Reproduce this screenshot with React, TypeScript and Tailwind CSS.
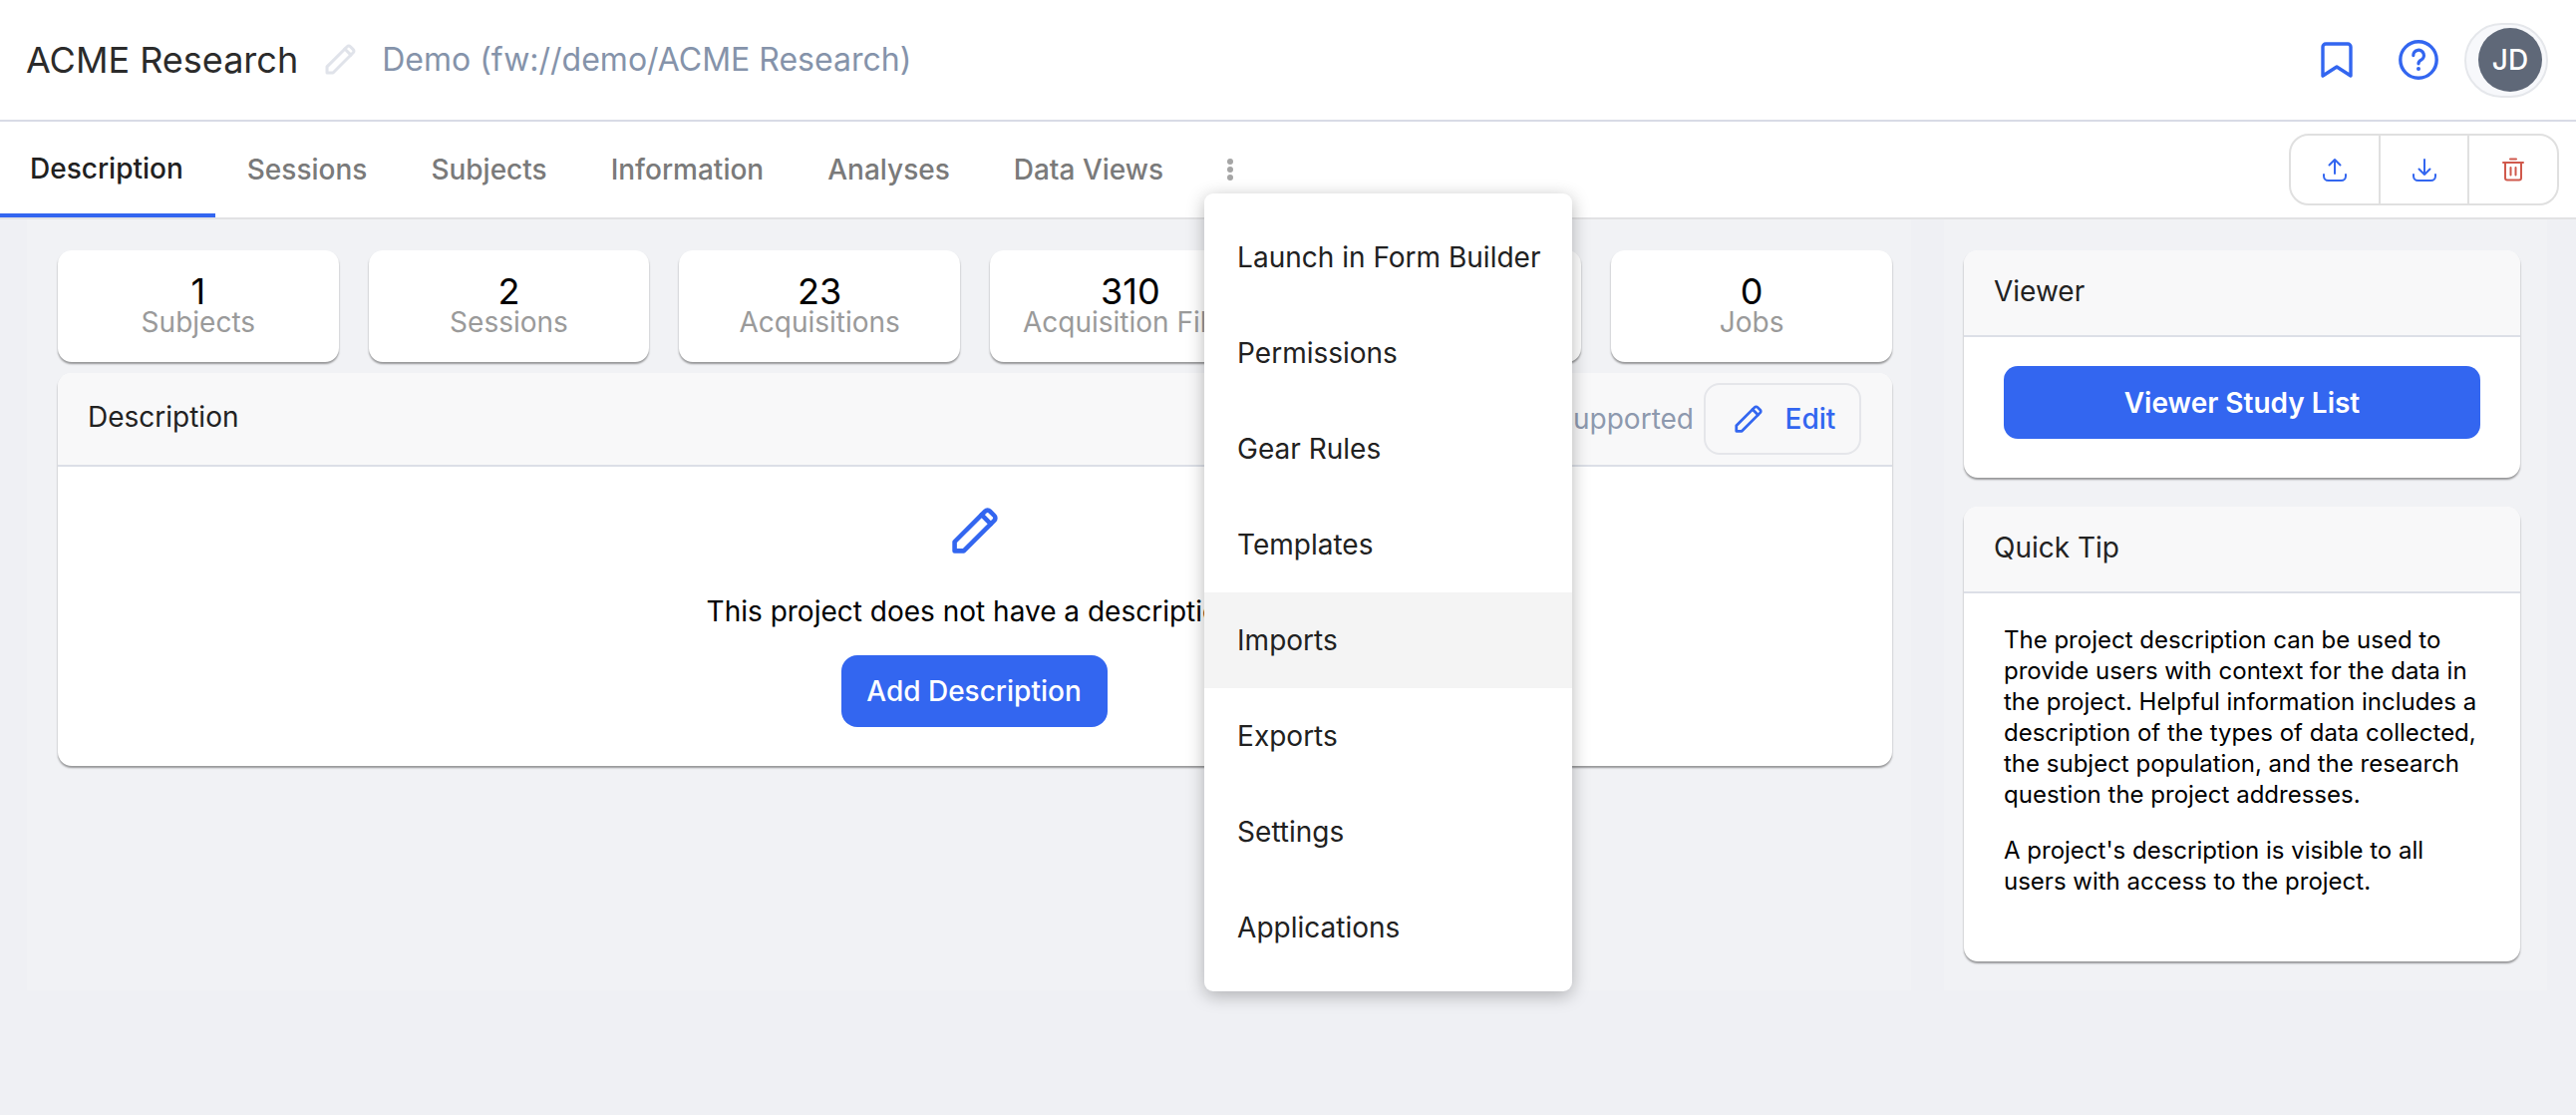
import type { ReactNode } from "react";

const tabs = ["Description", "Sessions", "Subjects", "Information", "Analyses", "Data Views"];

const stats = [
	{ value: "1", label: "Subjects" },
	{ value: "2", label: "Sessions" },
	{ value: "23", label: "Acquisitions" },
	{ value: "310", label: "Acquisition Files" },
	{ value: "0", label: "Analyses" },
	{ value: "0", label: "Jobs" },
];

const menuItems = [
	"Launch in Form Builder",
	"Permissions",
	"Gear Rules",
	"Templates",
	"Imports",
	"Exports",
	"Settings",
	"Applications",
];

function PencilIcon({ className }: { className: string }) {
	return (
		<svg viewBox="0 0 24 24" fill="none" stroke="currentColor" strokeWidth="2.2" strokeLinejoin="round" strokeLinecap="round" className={className}>
			<path d="M2.2 21.8v-4.4L16.9 2.7a1.6 1.6 0 0 1 2.3 0l2.1 2.1a1.6 1.6 0 0 1 0 2.3L6.6 21.8z" />
			<path d="M15.2 4.4l4.4 4.4" />
		</svg>
	);
}

function UploadIcon({ className }: { className: string }) {
	return (
		<svg viewBox="0 0 24 24" fill="none" stroke="currentColor" strokeWidth="2" strokeLinecap="round" strokeLinejoin="round" className={className}>
			<path d="M12 16V2M6.5 7.5L12 2l5.5 5.5" />
			<path d="M1 17v1.5A4.5 4.5 0 0 0 5.5 23h13a4.5 4.5 0 0 0 4.5-4.5V17" />
		</svg>
	);
}

function DownloadIcon({ className }: { className: string }) {
	return (
		<svg viewBox="0 0 24 24" fill="none" stroke="currentColor" strokeWidth="2" strokeLinecap="round" strokeLinejoin="round" className={className}>
			<path d="M12 2v15M6.5 11.5L12 17l5.5-5.5" />
			<path d="M1 17v1.5A4.5 4.5 0 0 0 5.5 23h13a4.5 4.5 0 0 0 4.5-4.5V17" />
		</svg>
	);
}

function TrashIcon({ className }: { className: string }) {
	return (
		<svg viewBox="0 0 24 24" fill="none" stroke="currentColor" strokeWidth="2" strokeLinecap="round" strokeLinejoin="round" className={className}>
			<path d="M9 1.5h6M2 5h20" />
			<path d="M4 5v15.5A2 2 0 0 0 6 22.5h12a2 2 0 0 0 2-2V5" />
			<path d="M9.5 10v7.5M14.5 10v7.5" />
		</svg>
	);
}

function Card({ title, right, children }: { title: string; right?: ReactNode; children: ReactNode }) {
	return (
		<div className="rounded-[14px] bg-white shadow-[0_2px_2px_rgba(0,0,0,0.38)]">
			<div className="flex min-h-[87px] items-center justify-between rounded-t-[14px] border-b-2 border-[#dcdfe7] bg-[#f8f8f9] py-[10px] pl-[30px] pr-[31px] text-[28px] text-[#222222]">
				<span className="pb-[4px]">{title}</span>
				{right}
			</div>
			{children}
		</div>
	);
}

export default function App() {
	return (
		<div className="flex h-screen w-full flex-col overflow-hidden bg-[#eff0f4] [font-family:Inter,sans-serif]">
			<header className="flex h-[122px] shrink-0 items-center border-b-2 border-[#d8dbe6] bg-white pl-[26px] pr-[28px]">
				<h1 className="text-[36px] font-normal text-[#2b2b2b]">ACME Research</h1>
				<PencilIcon className="ml-[26px] mb-[2px] h-[33px] w-[33px] text-[#e0e3ea]" />
				<span className="ml-[25px] text-[32px] text-[#8593aa]">Demo (fw://demo/ACME Research)</span>
				<div className="ml-auto flex items-center">
					<svg viewBox="0 0 32 36" fill="none" stroke="#3366f0" strokeWidth="3.4" strokeLinejoin="round" className="h-[36px] w-[32px]">
						<path d="M2 5a3 3 0 0 1 3-3h22a3 3 0 0 1 3 3v29l-14-9-14 9z" />
					</svg>
					<svg viewBox="0 0 40 40" fill="none" className="ml-[46px] h-[40px] w-[40px]">
						<circle cx="20" cy="20" r="18.2" stroke="#3366f0" strokeWidth="3.4" />
						<path d="M14.8 15.6a5.3 5.3 0 1 1 7.8 4.6c-1.7 1-2.6 1.8-2.6 3.6" stroke="#3366f0" strokeWidth="3.2" strokeLinecap="round" />
						<circle cx="20" cy="29" r="2" fill="#3366f0" />
					</svg>
					<div className="ml-[26px] flex h-[75px] w-[84px] items-center justify-end rounded-full border-2 border-[#e5e7eb] bg-[#f7f8fb] pr-[4px]">
						<div className="flex h-[64px] w-[64px] items-center justify-center rounded-full bg-[#5f6878] text-[28px] font-medium text-white">JD</div>
					</div>
				</div>
			</header>

			<nav className="flex h-[98px] shrink-0 items-center border-b-2 border-[#e2e2e4] bg-white pr-[17px]">
				<div className="flex h-full items-stretch">
					{tabs.map((tab, i) => (
						<div
							key={tab}
							className={
								i === 0
									? "flex items-center border-b-4 border-[#3366f0] pl-[30px] pr-[32px] pt-[1px] text-[28px] font-medium text-[#212121]"
									: "flex items-center px-[32px] text-[28px] font-medium text-[#7a7a7a]"
							}
						>
							{tab}
						</div>
					))}
					<div className="relative flex w-[70px] items-center justify-center">
						<div className="flex flex-col gap-[2px]">
							<span className="h-[6px] w-[6px] rounded-full bg-[#a5a5a5]" />
							<span className="h-[6px] w-[6px] rounded-full bg-[#a5a5a5]" />
							<span className="h-[6px] w-[6px] rounded-full bg-[#a5a5a5]" />
						</div>
						<div className="absolute left-[9px] top-[72px] z-10 w-[369px] rounded-[9px] bg-white py-[16px] shadow-[0_4px_18px_rgba(0,0,0,0.28)]">
							{menuItems.map((item) => (
								<div
									key={item}
									className={
										item === "Imports"
											? "flex h-[96px] items-center bg-[#f4f4f4] pl-[33px] text-[28px] text-[#212121]"
											: "flex h-[96px] items-center pl-[33px] text-[28px] text-[#212121]"
									}
								>
									{item}
								</div>
							))}
						</div>
					</div>
				</div>
				<div className="ml-auto flex h-[72px] w-[271px] rounded-[20px] border-2 border-[#e0e0e0]">
					<div className="flex flex-1 items-center justify-center border-r-2 border-[#e0e0e0]">
						<UploadIcon className="h-[24px] w-[24px] text-[#3366f0]" />
					</div>
					<div className="flex flex-1 items-center justify-center border-r-2 border-[#e0e0e0]">
						<DownloadIcon className="h-[24px] w-[24px] text-[#3366f0]" />
					</div>
					<div className="flex flex-1 items-center justify-center">
						<TrashIcon className="h-[24px] w-[24px] text-[#d0594c]" />
					</div>
				</div>
			</nav>

			<div className="flex flex-1 items-start pl-[27px]">
				<main className="h-[773px] w-[1890px] bg-[#f1f2f5] pl-[31px] pr-[19px] pt-[31px]">
					<div className="grid grid-cols-6 gap-[30px]">
						{stats.map((s) => (
							<div key={s.label} className="flex h-[112px] flex-col items-center justify-center rounded-[14px] bg-white pb-[4px] shadow-[0_2px_2px_rgba(0,0,0,0.38)]">
								<span className="text-[36px] leading-[36px] text-black">{s.value}</span>
								<span className="text-[28px] leading-[26px] text-[#9a9a9a]">{s.label}</span>
							</div>
						))}
					</div>
					<div className="mt-[11px]">
						<Card
							title="Description"
							right={
								<div className="flex items-center gap-[10px]">
									<span className="text-[28px] text-[#8d99ae]">Markdown supported</span>
									<div className="flex h-[72px] w-[158px] items-center justify-center gap-[22px] rounded-[16px] border-2 border-[#e5e6ea] pl-[4px] font-medium text-[#3366f0]">
										<PencilIcon className="h-[30px] w-[30px]" />
										<span>Edit</span>
									</div>
								</div>
							}
						>
							<div className="flex h-[300px] flex-col items-center pt-[39px]">
								<PencilIcon className="h-[50px] w-[50px] text-[#3366f0]" />
								<p className="mt-[40px] text-[28px] leading-[33px] text-black">This project does not have a description.</p>
								<button className="mr-[2px] mt-[27px] h-[72px] w-[267px] rounded-[16px] bg-[#3366f0] text-[28px] font-medium text-white">Add Description</button>
							</div>
						</Card>
					</div>
				</main>
				<aside className="ml-[33px] h-[773px] w-[605px] bg-[#f1f2f5] pl-[20px] pr-[27px] pt-[31px]">
					<Card title="Viewer">
						<div className="flex h-[141px] items-start px-[40px] pt-[29px]">
							<button className="h-[73px] w-full rounded-[14px] bg-[#3366f0] text-[28px] font-semibold text-white">Viewer Study List</button>
						</div>
					</Card>
					<div className="mt-[29px]">
						<Card title="Quick Tip">
							<div className="h-[369px] px-[40px] pt-[31px] text-[24px] leading-[31px] text-black">
								<p>The project description can be used to provide users with context for the data in the project. Helpful information includes a description of the types of data collected, the subject population, and the research question the project addresses.</p>
								<p className="mt-[25px]">A project's description is visible to all users with access to the project.</p>
							</div>
						</Card>
					</div>
				</aside>
			</div>
		</div>
	);
}
